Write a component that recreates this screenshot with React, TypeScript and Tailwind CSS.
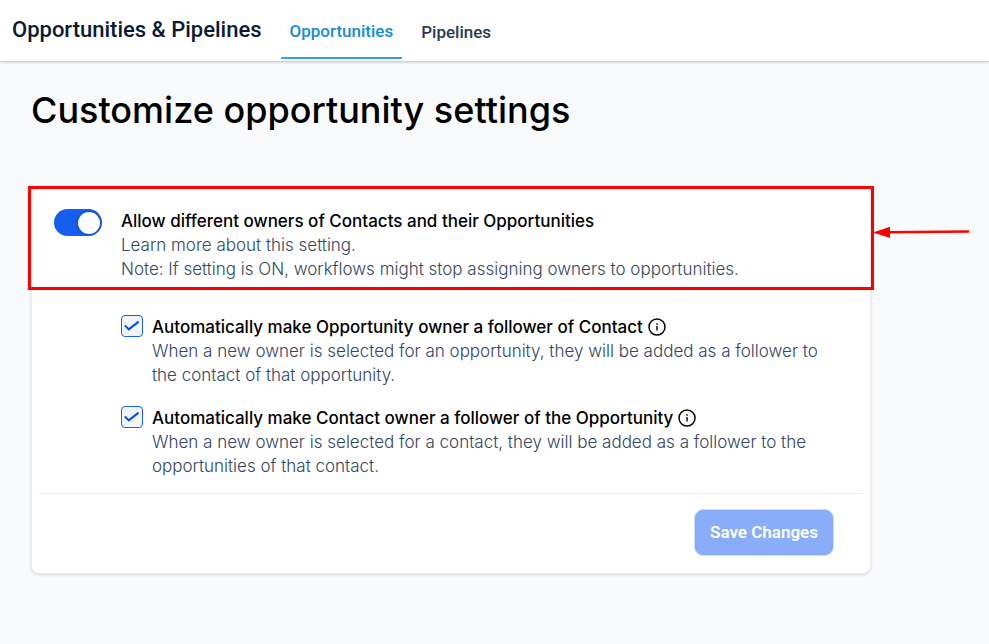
import { useState } from 'react';
import type { ReactNode } from 'react';

interface FollowerOptionProps {
  id: string;
  label: string;
  children: ReactNode;
}

const InfoIcon = () => (
  <svg viewBox="0 0 18 18" className="w-[18px] h-[18px]" fill="none" stroke="currentColor" aria-hidden="true">
    <circle cx="9" cy="9" r="8" strokeWidth="1.5" />
    <path d="M9 8v4.6" strokeWidth="1.4" />
    <path d="M9 5.2v1.5" strokeWidth="1.5" />
  </svg>
);

const FollowerOption = ({ id, label, children }: FollowerOptionProps) => {
  const [checked, setChecked] = useState(true);

  return (
    <div className="flex items-start gap-[9px]">
      <span className="grid shrink-0">
        <input
          id={id}
          type="checkbox"
          checked={checked}
          onChange={(e) => setChecked(e.target.checked)}
          className="col-start-1 row-start-1 w-[22px] h-[22px] appearance-none rounded-[4px] border border-[#155eef] bg-[#f2f4f7] cursor-pointer"
        />
        {checked && (
          <svg
            viewBox="0 0 22 22"
            className="col-start-1 row-start-1 w-[22px] h-[22px] pointer-events-none"
            fill="none"
            stroke="#004eeb"
            strokeWidth="2"
            aria-hidden="true"
          >
            <path d="M3.8 10.4l4 4L17.6 6.6" />
          </svg>
        )}
      </span>
      <div className="leading-6">
        <div className="flex items-center gap-[5px] text-black">
          <label htmlFor={id} className="font-medium">
            {label}
          </label>
          <button type="button" aria-label="More info">
            <InfoIcon />
          </button>
        </div>
        <p className="font-light text-[#344563]">{children}</p>
      </div>
    </div>
  );
};

const App = () => {
  const [allowDifferent, setAllowDifferent] = useState(true);

  return (
    <div className="min-h-screen bg-[#f9fafc] font-['Inter',sans-serif]">
      {/* Header */}
      <header className="relative flex bg-white h-[61px] shadow-[0_1px_3px_rgba(0,0,0,0.25)] font-['Roboto',sans-serif] font-medium">
        <h2 className="pl-3 pt-[14px] text-[22px] leading-8 text-[#0b1a33]">Opportunities &amp; Pipelines</h2>
        <nav className="flex ml-[19px] h-[59px] text-[17px] leading-6">
          <a href="#opportunities" className="px-[9px] pt-[19px] text-[#188bd8] border-b-2 border-[#37a2de]">
            Opportunities
          </a>
          <a href="#pipelines" className="ml-[10px] px-[9px] pt-5 text-[#2b3a52]">
            Pipelines
          </a>
        </nav>
      </header>

      <main className="px-[31px] pt-[25px] pb-10">
        <h1 className="text-4xl leading-[48px] font-medium text-black">Customize opportunity settings</h1>

        {/* Settings card */}
        <div className="mt-[54px] max-w-[840px] rounded-lg border border-[#eaecf0] bg-white text-[17px] shadow-[0_1px_3px_rgba(16,24,40,0.15)]">
          <section className="relative flex items-start gap-[19px] pl-[22px] pr-6 pt-5">
            <input
              id="allow-different"
              type="checkbox"
              role="switch"
              checked={allowDifferent}
              onChange={(e) => setAllowDifferent(e.target.checked)}
              className="shrink-0 flex items-center w-12 h-[27px] px-[2px] appearance-none rounded-full bg-gray-300 checked:bg-[#155eef] checked:justify-end before:block before:w-[22px] before:h-[22px] before:rounded-full before:bg-white before:shadow-[0_0_3px_rgba(0,0,0,0.4)] cursor-pointer"
            />
            <div className="leading-6 text-[#34495e]">
              <label htmlFor="allow-different" className="block font-medium text-black">
                Allow different owners of Contacts and their Opportunities
              </label>
              <a href="#learn-more" className="block font-light">
                Learn more about this setting.
              </a>
              <p className="font-light">
                Note: If setting is ON, workflows might stop assigning owners to opportunities.
              </p>
            </div>

            {/* Highlight and pointer */}
            <div className="absolute -inset-x-1 -top-[3px] -bottom-[9px] border-[3px] border-[#ff0000] pointer-events-none" />
            <svg
              viewBox="0 0 96 12"
              className="absolute left-full top-[37px] ml-[3px] w-24 h-3 text-[#ff0000] pointer-events-none"
              aria-hidden="true"
            >
              <path d="M0 6.4L17 0.8v11.2z" fill="currentColor" />
              <path d="M16 6.3L96 5.5" stroke="currentColor" strokeWidth="2.6" />
            </svg>
          </section>

          <section className="flex flex-col gap-[19px] pl-[89px] pr-10 pt-[34px] pb-[15px]">
            <FollowerOption id="opportunity-owner" label="Automatically make Opportunity owner a follower of Contact">
              When a new owner is selected for an opportunity, they will be added as a follower to the contact of that
              opportunity.
            </FollowerOption>
            <FollowerOption id="contact-owner" label="Automatically make Contact owner a follower of the Opportunity">
              When a new owner is selected for a contact, they will be added as a follower to the opportunities of that
              contact.
            </FollowerOption>
          </section>

          <footer className="flex justify-end mx-[7px] pt-4 pb-[18px] pr-[30px] border-t border-[#eaecf0]">
            <button
              type="button"
              className="h-[45px] px-[14px] rounded-lg border border-[#84a9f8] bg-[#8aadf9] text-[17px] font-semibold text-white font-['Roboto',sans-serif] shadow-[0_0_0_1px_#d1e0ff]"
            >
              Save Changes
            </button>
          </footer>
        </div>
      </main>
    </div>
  );
};

export default App;
